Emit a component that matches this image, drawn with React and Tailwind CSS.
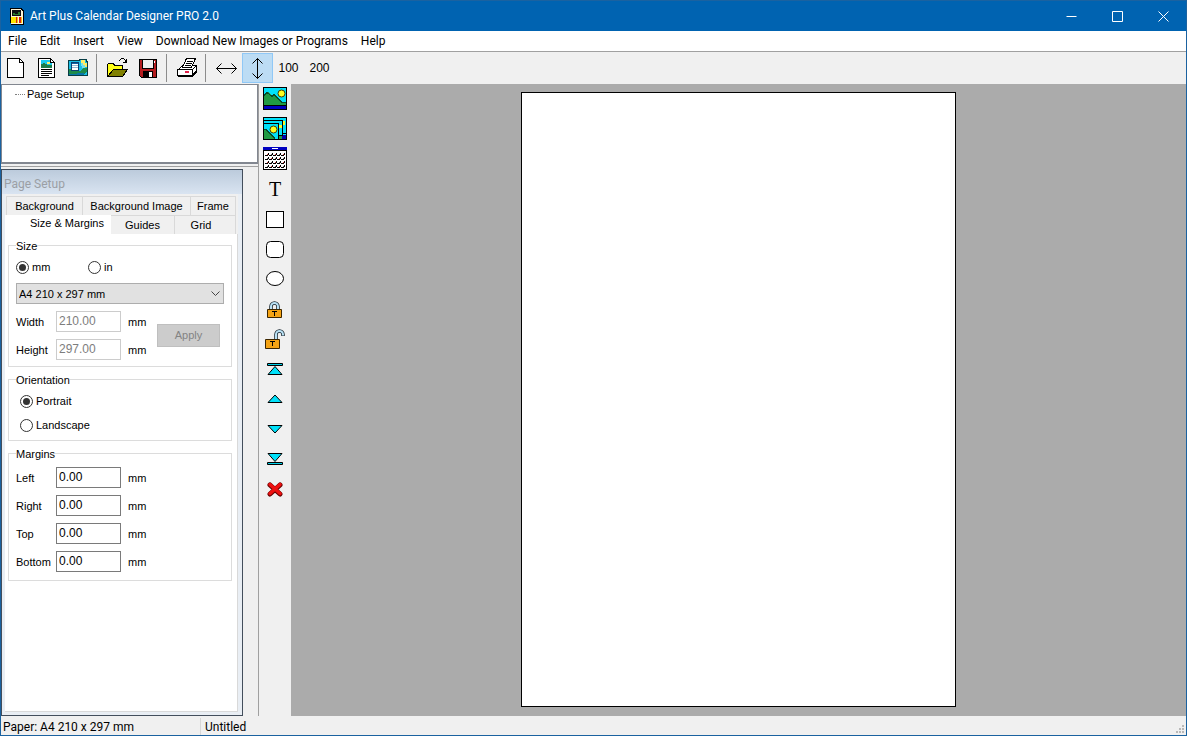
import { useState } from "react";

const UI_FONT = "font-[Roboto,'Open_Sans',sans-serif]";
const PANEL_FONT = "font-['Liberation_Sans',Arial,sans-serif]";

const menus = ["File", "Edit", "Insert", "View", "Download New Images or Programs", "Help"];

function AppIcon() {
  return (
    <svg width="14" height="17" viewBox="0 0 14 17" shapeRendering="crispEdges">
      <path d="M0 0h12l2 3v14H1V15H0z" fill="#000" />
      <path d="M1 1h10l2 3v12H1z" fill="#fff4d8" />
      <path d="M2 2h9v6H2z" fill="#111" />
      <path d="M3 5h2v1h3V4h2v3H3z" fill="#2d7a2c" />
      <path d="M1 9h5v6H1z" fill="#ffe500" />
      <path d="M7 9h1v6H7zM11 9h1v6h-1z" fill="#ffc400" />
      <path d="M6 9h1v6H6zM9 9h2v6H9z" fill="#d3241c" />
    </svg>
  );
}

function NewIcon() {
  return (
    <svg width="19" height="20" viewBox="0 0 19 20" shapeRendering="crispEdges">
      <path d="M.5.5h12l4 4v15H.5z" fill="#fff" stroke="#000" />
      <path d="M12.5.5v4h4" fill="none" stroke="#000" />
    </svg>
  );
}

function NewFromTemplateIcon() {
  return (
    <svg width="19" height="20" viewBox="0 0 19 20" shapeRendering="crispEdges">
      <path d="M.5.5h12l4 4v15H.5z" fill="#fff" stroke="#000" />
      <path d="M3 2h9v3h2v5H3z" fill="#18c8ee" />
      <path d="M3 6h2V5h2v1h2v1h5v3H3z" fill="#1d7d48" />
      <path d="M9 4h3v2H9z" fill="#fff36a" />
      <path d="M12.5.5v4h4" fill="none" stroke="#000" />
      <path d="M3 11.5h11M3 13.5h11M3 15.5h11M3 17.5h8" stroke="#000" />
    </svg>
  );
}

function WizardIcon() {
  return (
    <svg width="21" height="18" viewBox="0 0 21 18" shapeRendering="crispEdges">
      <path d="M.5 1.5h11v-1h7l1 4v12H.5z" fill="#19bde5" stroke="#083d45" />
      <path d="M1 10h4l3 2h5l2-3h4v4l-4 3H1z" fill="#1d8b4c" />
      <path d="M1 15h6l3-1h6v2H1z" fill="#0876a8" />
      <path d="M3.5 3.5h7v8h-7z" fill="#fff" stroke="#0b3f71" />
      <path d="M4 4h6v1H4z" fill="#1264a6" />
      <path d="M4 6.5h6M4 8.5h6" stroke="#8fb9d4" />
      <path d="M13 1h4v3h2v4h-4V5h-2z" fill="#ffed68" />
      <path d="M13 4h2v2h2v3h-3z" fill="#74e0ee" />
    </svg>
  );
}

function OpenIcon() {
  return (
    <svg width="22" height="20" viewBox="0 0 22 20" shapeRendering="crispEdges">
      <path d="M.5 18.5v-12l1-1h5l1 2h8v4" fill="#ffff19" stroke="#000" />
      <path d="M1 18V8h14v3H7z" fill="#ffff19" />
      <path d="M.5 18.5l6-7h14l-5 7z" fill="#808000" stroke="#000" />
      <path d="M12 2.5h1M13 1.5h1M14 .5h3M17 1.5h1M18 2.5h1M19.500 1v4M16 4.5h4M18 3.5h2" stroke="#000" fill="none" />
    </svg>
  );
}

function SaveIcon() {
  return (
    <svg width="19" height="19" viewBox="0 0 19 19" shapeRendering="crispEdges">
      <path d="M.5.5h17v18h-15l-2-2z" fill="#b51d20" stroke="#000" />
      <path d="M3.5.5h11v9h-11z" fill="#efefef" stroke="#000" />
      <path d="M4 12h10v7H4z" fill="#000" />
      <path d="M10 13h3v5h-3z" fill="#fff" />
      <path d="M15 2h1v2h-1z" fill="#fff" />
    </svg>
  );
}

function PrintIcon() {
  return (
    <svg width="21" height="20" viewBox="0 0 21 20" shapeRendering="crispEdges">
      <path d="M1.5 11.5l4-4h14v7l-4 4h-14z" fill="#fff" stroke="#000" />
      <path d="M5.5 9.5l4-9h9l-4 9z" fill="#fff" stroke="#000" />
      <path d="M10 3.5h6M9 5.5h6M8 7.5h6" stroke="#000" />
      <path d="M.5 11.5h15v6H.5zM15.5 11.5l4-4M16 16.5l4-4" fill="#fff" stroke="#000" />
      <path d="M15.5 12v6M2 18.5h13" stroke="#000" />
      <path d="M8 13h4v2H8z" fill="#e1204a" />
    </svg>
  );
}

function FitWidthIcon() {
  return (
    <svg width="21" height="11" viewBox="0 0 21 11" fill="none" stroke="#000">
      <path d="M.5 5.5h20M5.5.5l-5 5 5 5M15.5.5l5 5-5 5" />
    </svg>
  );
}

function FitHeightIcon() {
  return (
    <svg width="11" height="21" viewBox="0 0 11 21" fill="none" stroke="#000">
      <path d="M5.5.5v20M.5 5.5l5-5 5 5M.5 15.5l5 5 5-5" />
    </svg>
  );
}

function ImageIcon() {
  return (
    <svg width="24" height="24" viewBox="0 0 24 24" shapeRendering="crispEdges">
      <path d="M.5.5h23v22H.5z" fill="#00e1fa" stroke="#000" />
      <path d="M1 18V9l4-4 4 4 2-2 8 8h4v3z" fill="#209a43" />
      <path d="M1 8.500l3-3 5 4 2-2 8 8h4" fill="none" stroke="#064b2b" />
      <path d="M1 18h22v4H1z" fill="#0000c0" />
      <path d="M1 18.5h22" stroke="#000" />
      <circle cx="18.5" cy="6.5" r="3.5" fill="#ffff20" stroke="#443f00" shapeRendering="auto" />
    </svg>
  );
}

function ImagesIcon() {
  return (
    <svg width="24" height="24" viewBox="0 0 24 24" shapeRendering="crispEdges">
      <path d="M.5.5h23v22H.5z" fill="#00e1fa" stroke="#000" />
      <path d="M15 18h8v4h-8z" fill="#209a43" />
      <path d="M19 18h4v4h-4z" fill="#0000b0" />
      <path d="M16 8h3v3h-3zM20 4h2v4h-2z" fill="#ffff20" />
      <path d="M1 3.5h18.500v15M1 6.500h14.500V22M15 18.500h4M20 16.500h3" fill="none" stroke="#000" />
      <path d="M1 22v-9h2l9 9z" fill="#209a43" />
      <path d="M1 12.500h2l9 9" fill="none" stroke="#064b2b" />
      <circle cx="10.500" cy="12.500" r="3.500" fill="#ffff20" stroke="#443f00" shapeRendering="auto" />
    </svg>
  );
}

function CalendarIcon() {
  const rows = [5, 9, 13, 17];
  const cols = [2, 6, 10, 14, 18];
  return (
    <svg width="24" height="24" viewBox="0 0 24 24" shapeRendering="crispEdges">
      <path d="M0 0h24v23H0z" fill="#000" />
      <path d="M0 0h24v3H0z" fill="#0000c0" />
      <path d="M9 1h6v1H9z" fill="#fff" />
      <path d="M1 4h22v18H1z" fill="#fff" />
      {rows.map((y, r) =>
        cols.map((x, c) => (
          <g key={`${r}-${c}`}>
            <path d={`M${x} ${y + 3}h3v1h-3zM${x + 3} ${y + 1}h1v2h-1z`} fill="#000" />
            <path d={`M${x + 2} ${y + 2}h1v1h-1z`} fill={(r + c) % 2 ? "#555" : "#c33"} />
          </g>
        ))
      )}
    </svg>
  );
}

function TextIcon() {
  return <span className="font-['Liberation_Serif',serif] text-[20px] leading-5 text-black">T</span>;
}

function RectIcon() {
  return (
    <svg width="18" height="17" viewBox="0 0 18 17">
      <rect x=".5" y=".5" width="17" height="16" fill="#fff" stroke="#000" />
    </svg>
  );
}

function RoundRectIcon() {
  return (
    <svg width="18" height="17" viewBox="0 0 18 17">
      <rect x=".5" y=".5" width="17" height="16" rx="4" fill="#fff" stroke="#000" />
    </svg>
  );
}

function EllipseIcon() {
  return (
    <svg width="18" height="16" viewBox="0 0 18 16">
      <ellipse cx="9" cy="7.500" rx="8.500" ry="7" fill="#fff" stroke="#000" />
    </svg>
  );
}

function LockIcon() {
  return (
    <svg width="16" height="17" viewBox="0 0 16 17">
      <path d="M4 9V5.500a3.500 3.500 0 0 1 7 0V9" fill="none" stroke="#16252f" strokeWidth="3.500" />
      <path d="M4 9V5.500a3.500 3.500 0 0 1 7 0V9" fill="none" stroke="#b9e1f5" strokeWidth="2" />
      <path d="M.5 8.500h14v8H.5z" fill="#f5a313" stroke="#3b2500" />
      <path d="M5 10.500h5M7.500 10v5" stroke="#000" />
    </svg>
  );
}

function UnlockIcon() {
  return (
    <svg width="20" height="20" viewBox="0 0 20 20">
      <path d="M11 11V5.500a3.500 3.500 0 0 1 7 0V7" fill="none" stroke="#16252f" strokeWidth="3.500" />
      <path d="M11 11V5.500a3.500 3.500 0 0 1 7 0v1" fill="none" stroke="#b9e1f5" strokeWidth="2" />
      <path d="M.5 10.500h14v9H.5z" fill="#f5a313" stroke="#3b2500" />
      <path d="M5 12.500h5M7.500 12v5" stroke="#000" />
    </svg>
  );
}

function ToFrontIcon() {
  return (
    <svg width="16" height="12" viewBox="0 0 16 12">
      <path d="M.5.5h15v2H.5z" fill="#00cfe8" stroke="#000" />
      <path d="M1 11.500L8 3.500l7 8z" fill="#00e1fa" stroke="#000" />
    </svg>
  );
}

function UpIcon() {
  return (
    <svg width="16" height="10" viewBox="0 0 16 10">
      <path d="M1 8.500L8 1l7 7.500z" fill="#00e1fa" stroke="#000" />
    </svg>
  );
}

function DownIcon() {
  return (
    <svg width="16" height="9" viewBox="0 0 16 9">
      <path d="M1 .5L8 8l7-7.500z" fill="#00e1fa" stroke="#000" />
    </svg>
  );
}

function ToBackIcon() {
  return (
    <svg width="16" height="12" viewBox="0 0 16 12">
      <path d="M1 .5L8 8.500l7-8z" fill="#00e1fa" stroke="#000" />
      <path d="M.5 9.500h15v2H.5z" fill="#00cfe8" stroke="#000" />
    </svg>
  );
}

function DeleteIcon() {
  return (
    <svg width="16" height="15" viewBox="0 0 16 15">
      <path d="M3 3l10 9M13 3L3 12" stroke="#600" strokeWidth="5" strokeLinecap="round" />
      <path d="M3 2.500l10 9M13 2.500L3 11.500" stroke="#ee1111" strokeWidth="3.500" strokeLinecap="round" />
    </svg>
  );
}

const tools = [
  { label: "Insert image", Icon: ImageIcon },
  { label: "Insert images", Icon: ImagesIcon },
  { label: "Insert calendar", Icon: CalendarIcon },
  { label: "Insert text", Icon: TextIcon },
  { label: "Rectangle", Icon: RectIcon },
  { label: "Rounded rectangle", Icon: RoundRectIcon },
  { label: "Ellipse", Icon: EllipseIcon },
  { label: "Lock", Icon: LockIcon },
  { label: "Unlock", Icon: UnlockIcon },
  { label: "Bring to front", Icon: ToFrontIcon },
  { label: "Bring forward", Icon: UpIcon },
  { label: "Send backward", Icon: DownIcon },
  { label: "Send to back", Icon: ToBackIcon },
  { label: "Delete", Icon: DeleteIcon },
];

function ToolButton({ label, active, onClick, children }) {
  return (
    <button
      type="button"
      aria-label={label}
      onClick={onClick}
      className={`flex h-[30px] w-[31px] shrink-0 items-center justify-center ${
        active ? "border border-[#90c8f6] bg-[#bcdcf4]" : "hover:bg-[#dcebf7]"
      }`}
    >
      {children}
    </button>
  );
}

function Separator() {
  return (
    <div className="flex h-7 w-2 shrink-0 pl-0.5">
      <div className="w-px bg-[#8c8c8c]" />
    </div>
  );
}

function TitleBar() {
  return (
    <header className="flex h-[30px] shrink-0 items-center bg-[#0063b1] pl-[9px] text-white">
      <AppIcon />
      <h1 className="ml-1.5 flex-1 text-[12px] font-normal">Art Plus Calendar Designer PRO 2.0</h1>
      <button type="button" aria-label="Minimize" className="flex h-full w-[46px] items-center justify-center">
        <svg width="11" height="11" viewBox="0 0 11 11" stroke="#fff">
          <path d="M.5 5.500h10" />
        </svg>
      </button>
      <button type="button" aria-label="Maximize" className="flex h-full w-[46px] items-center justify-center">
        <svg width="11" height="11" viewBox="0 0 11 11" fill="none" stroke="#fff">
          <path d="M.5.500h10v10H.5z" />
        </svg>
      </button>
      <button type="button" aria-label="Close" className="flex h-full w-[46px] items-center justify-center">
        <svg width="11" height="11" viewBox="0 0 11 11" fill="none" stroke="#fff">
          <path d="M.5.500l10 10M10.500.5l-10 10" />
        </svg>
      </button>
    </header>
  );
}

function MenuBar() {
  return (
    <nav className="flex h-[21px] shrink-0 items-center gap-[13px] border-b border-[#a0a0a0] bg-white pl-[7px] text-[12px]">
      {menus.map((m) => (
        <button key={m} type="button" className="whitespace-nowrap hover:bg-[#cce8ff]">
          {m}
        </button>
      ))}
    </nav>
  );
}

function Toolbar({ zoom, setZoom }) {
  return (
    <div className={`flex h-8 shrink-0 items-center bg-[#f0f0f0] text-[12px] ${PANEL_FONT}`}>
      <ToolButton label="New"><NewIcon /></ToolButton>
      <ToolButton label="New from template"><NewFromTemplateIcon /></ToolButton>
      <ToolButton label="Calendar wizard"><WizardIcon /></ToolButton>
      <Separator />
      <ToolButton label="Open"><OpenIcon /></ToolButton>
      <ToolButton label="Save"><SaveIcon /></ToolButton>
      <Separator />
      <ToolButton label="Print"><PrintIcon /></ToolButton>
      <Separator />
      <ToolButton label="Fit width" active={zoom === "width"} onClick={() => setZoom("width")}>
        <FitWidthIcon />
      </ToolButton>
      <ToolButton label="Fit height" active={zoom === "height"} onClick={() => setZoom("height")}>
        <FitHeightIcon />
      </ToolButton>
      <ToolButton label="Zoom 100" active={zoom === "100"} onClick={() => setZoom("100")}>100</ToolButton>
      <ToolButton label="Zoom 200" active={zoom === "200"} onClick={() => setZoom("200")}>200</ToolButton>
    </div>
  );
}

function Radio({ name, label, checked, onChange, className = "" }) {
  return (
    <label className={`flex h-4 items-center gap-[3px] ${className}`}>
      <input
        type="radio"
        name={name}
        checked={checked}
        onChange={onChange}
        className="h-[13px] w-[13px] appearance-none rounded-full border border-[#333] bg-white bg-clip-content p-[2px] checked:bg-[#333]"
      />
      {label}
    </label>
  );
}

function MeasureRow({ label, value, unit, disabled }) {
  const id = `field-${label.toLowerCase()}`;
  return (
    <div className="flex h-[21px] items-center">
      <label htmlFor={id} className="w-10 pt-0.5">{label}</label>
      <input
        id={id}
        type="text"
        defaultValue={value}
        disabled={disabled}
        className={`h-[21px] w-[65px] border bg-white px-0.5 pb-0.5 text-[12px] ${
          disabled ? "border-[#ccc] text-[#7d7d7d]" : "border-[#7a7a7a] text-black"
        }`}
      />
      <span className="ml-[7px] pt-0.5">{unit}</span>
    </div>
  );
}

function Group({ title, className = "", children }) {
  return (
    <fieldset className={`border border-[#dcdcdc] px-[7px] ${className}`}>
      <legend className="h-3 leading-[14px]">{title}</legend>
      {children}
    </fieldset>
  );
}

function Tab({ active, className, children }) {
  return (
    <button
      type="button"
      role="tab"
      aria-selected={!!active}
      className={`flex items-center justify-center whitespace-nowrap ${
        active ? "h-[19px] bg-white pb-0.5 pl-[18px]" : "h-[19px] border-t border-r border-[#d9d9d9] bg-[#f0f0f0]"
      } ${className}`}
    >
      {children}
    </button>
  );
}

function PageSetup() {
  const [unit, setUnit] = useState("mm");
  const [orientation, setOrientation] = useState("portrait");

  return (
    <section className="mt-0.5 flex w-[242px] flex-1 flex-col border border-[#434e5c] bg-[#f0f0f0]">
      <h2 className={`h-6 shrink-0 bg-linear-to-b from-[#bccbdc] to-[#d9e4f1] pl-0.5 text-[12px] leading-7 text-[#9b9fa5] ${UI_FONT}`}>
        Page Setup
      </h2>
      <div className={`flex flex-1 flex-col border-r-4 border-b-[3px] border-l-[3px] border-[#e9eef4] pt-0.5 text-[11px] text-black ${PANEL_FONT}`}>
        <div role="tablist" className="shrink-0 pr-0.5">
          <div className="ml-px flex border-l border-[#d9d9d9]">
            <Tab className="w-[76px]">Background</Tab>
            <Tab className="w-[108px]">Background Image</Tab>
            <Tab className="flex-1">Frame</Tab>
          </div>
          <div className="flex">
            <Tab active className="w-[106px]">Size &amp; Margins</Tab>
            <Tab className="w-16">Guides</Tab>
            <Tab className="flex-1 pr-2">Grid</Tab>
          </div>
        </div>
        <div className="flex flex-1 flex-col gap-1.5 border-r border-b border-[#d9d9d9] bg-white pt-[5px] pr-[5px] pl-[3px]">
          <Group title="Size" className="h-32">
            <div className="mt-2 flex">
              <Radio name="unit" label="mm" checked={unit === "mm"} onChange={() => setUnit("mm")} className="w-[72px]" />
              <Radio name="unit" label="in" checked={unit === "in"} onChange={() => setUnit("in")} />
            </div>
            <div className="relative mt-2">
              <select
                aria-label="Paper size"
                className="block h-[21px] w-full appearance-none border border-[#adadad] bg-[#e1e1e1] px-0.5 pt-0.5 text-[11px]"
              >
                <option>A4 210 x 297 mm</option>
                <option>A3 297 x 420 mm</option>
              </select>
              <svg className="pointer-events-none absolute top-2 right-1" width="9" height="6" viewBox="0 0 9 6" fill="none" stroke="#444">
                <path d="M.5.500l4 4 4-4" />
              </svg>
            </div>
            <div className="mt-[7px] flex items-center justify-between pr-1">
              <div className="flex flex-col gap-[7px]">
                <MeasureRow label="Width" value="210.00" unit={unit} disabled />
                <MeasureRow label="Height" value="297.00" unit={unit} disabled />
              </div>
              <button type="button" disabled className="h-[23px] w-[63px] border border-[#bfbfbf] bg-[#ccc] text-[11px] text-[#838383]">
                Apply
              </button>
            </div>
          </Group>
          <Group title="Orientation" className="h-[68px]">
            <div className="mt-2 flex flex-col gap-2 pl-1">
              <Radio
                name="orientation"
                label="Portrait"
                checked={orientation === "portrait"}
                onChange={() => setOrientation("portrait")}
              />
              <Radio
                name="orientation"
                label="Landscape"
                checked={orientation === "landscape"}
                onChange={() => setOrientation("landscape")}
              />
            </div>
          </Group>
          <Group title="Margins">
            <div className="flex flex-col gap-[7px] py-2">
              {["Left", "Right", "Top", "Bottom"].map((side) => (
                <MeasureRow key={side} label={side} value="0.00" unit={unit} />
              ))}
            </div>
          </Group>
        </div>
      </div>
    </section>
  );
}

function SidePanel() {
  return (
    <aside className="flex w-[258px] shrink-0 flex-col border-r border-[#a0a0a0] bg-[#f0f0f0]">
      <div className={`h-20 shrink-0 border border-b-2 border-[#828790] bg-white pl-[13px] text-[11px] ${PANEL_FONT}`}>
        <div className="flex h-[18px] items-center gap-0.5">
          <span className="w-[10px] border-t border-dotted border-[#808080]" />
          Page Setup
        </div>
      </div>
      <div className="h-[3px] shrink-0 border-b border-[#a0a0a0]" />
      <PageSetup />
    </aside>
  );
}

export default function App() {
  const [zoom, setZoom] = useState("height");

  return (
    <div className={`flex h-screen flex-col overflow-hidden border border-[#1b62a0] bg-[#f0f0f0] text-black ${UI_FONT}`}>
      <TitleBar />
      <MenuBar />
      <Toolbar zoom={zoom} setZoom={setZoom} />
      <main className="flex min-h-0 flex-1">
        <SidePanel />
        <div className="flex w-8 shrink-0 flex-col items-center bg-[#f0f0f0]">
          {tools.map(({ label, Icon }) => (
            <ToolButton key={label} label={label}>
              <Icon />
            </ToolButton>
          ))}
        </div>
        <div className="flex min-w-0 flex-1 justify-center bg-[#ababab] pt-2 pb-[9px]">
          <div className="aspect-[210/297] h-full border border-black bg-white" />
        </div>
      </main>
      <footer className="flex h-[19px] shrink-0 items-center bg-[#f0f0f0] pt-0.5 text-[12px]">
        <span className="w-[200px] border-r border-[#d7d7d7] pl-0.5">Paper: A4 210 x 297 mm</span>
        <span className="flex-1 pl-1">Untitled</span>
        <svg className="self-end" width="12" height="12" viewBox="0 0 12 12" fill="#b8b8b8" shapeRendering="crispEdges">
          <path d="M8 2h2v2H8zM5 5h2v2H5zM8 5h2v2H8zM2 8h2v2H2zM5 8h2v2H5zM8 8h2v2H8z" />
        </svg>
      </footer>
    </div>
  );
}
